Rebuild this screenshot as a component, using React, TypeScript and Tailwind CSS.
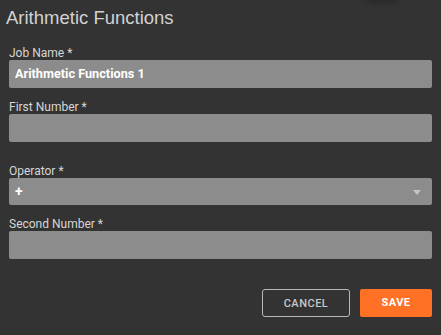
import React from "react";

const fields = [
  { label: "Job Name *", value: "Arithmetic Functions 1" },
  { label: "First Number *", value: "" },
];

function Label({ children }: { children: React.ReactNode }) {
  return <label className="block text-[12px] leading-[14px] text-[#d6d6d6]">{children}</label>;
}

export default function App() {
  return (
    <div className="relative h-[335px] w-[441px] overflow-hidden bg-[#333333] font-['Roboto',sans-serif]">
      {/* shadow of something above the dialog */}
      <div className="absolute -top-[14px] left-[365px] h-[16px] w-[34px] rounded-full bg-[#262626] blur-[3px]" />

      <h2 className="pl-[6px] pt-[8px] font-['Liberation_Sans',Arial,sans-serif] text-[18.5px] leading-[20px] text-[#d2d2d2]">
        Arithmetic Functions
      </h2>

      <div className="px-[9px] pt-[18px]">
        {fields.map((f, i) => (
          <div key={i} className={i === 0 ? "" : "mt-[12px]"}>
            <Label>{f.label}</Label>
            <div className="flex h-[28px] items-center rounded-[2px] bg-[#8c8c8c] px-[6px] text-[12.7px] font-bold text-white">
              {f.value}
            </div>
          </div>
        ))}

        <div className="mt-[22px]">
          <Label>Operator *</Label>
          <div className="flex h-[27px] items-center justify-between rounded-[2px] bg-[#8c8c8c] pl-[6px] pr-[11px] text-[14px] font-bold text-white">
            <span>+</span>
            <svg width="8" height="5" viewBox="0 0 8 5" className="mt-[1px]">
              <path d="M0 0h8L4 5z" fill="#c4c4c4" />
            </svg>
          </div>
        </div>

        <div className="mt-[12px]">
          <Label>Second Number *</Label>
          <div className="h-[28px] rounded-[2px] bg-[#8c8c8c]" />
        </div>

        <div className="mt-[30px] flex justify-end gap-[10px]">
          <button className="h-[28px] w-[88px] rounded-[3px] border border-[#b8b8b8] pt-[2px] text-[11px] font-medium tracking-[0.5px] text-[#c8c8c8]">
            CANCEL
          </button>
          <button className="h-[28px] w-[72px] rounded-[2px] bg-[#ff7124] text-[11px] font-bold tracking-[0.5px] text-white">
            SAVE
          </button>
        </div>
      </div>
    </div>
  );
}
